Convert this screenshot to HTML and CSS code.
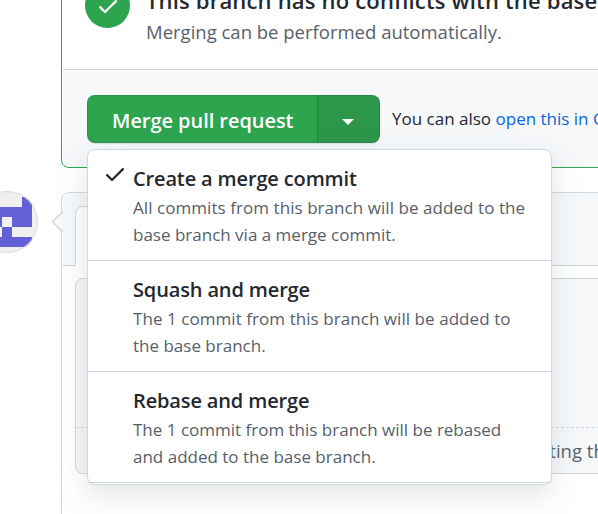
FILE: index.html
```html
<!DOCTYPE html>
<html lang="en">
<head>
<meta charset="utf-8">
<title>Merge pull request</title>
<link rel="stylesheet" href="styles.css">
</head>
<body>
<main class="page">
  <section class="merge-box">
    <div class="status">
      <span class="status-icon"><svg width="24" height="24" viewBox="0 0 16 16" fill="currentColor"><path d="M13.78 4.22a.75.75 0 0 1 0 1.06l-7.25 7.25a.75.75 0 0 1-1.06 0L2.22 9.28a.75.75 0 1 1 1.06-1.06L6 10.94l6.72-6.72a.75.75 0 0 1 1.06 0Z"/></svg></span>
      <div class="status-text">
        <h3><span>This branch has no conflicts with the base branch</span></h3>
        <p><span>Merging can be performed automatically.</span></p>
      </div>
    </div>
    <div class="actions">
      <div class="button-group">
        <button class="merge"><span>Merge pull request</span></button>
        <button class="toggle" aria-label="Select merge method"><span class="caret"></span></button>
        <div class="menu">
          <div class="item">
            <svg class="check" width="24" height="24" viewBox="0 0 16 16" fill="currentColor"><path d="M13.78 4.22a.75.75 0 0 1 0 1.06l-7.25 7.25a.75.75 0 0 1-1.06 0L2.22 9.28a.75.75 0 1 1 1.06-1.06L6 10.94l6.72-6.72a.75.75 0 0 1 1.06 0Z"/></svg>
            <h4><span>Create a merge commit</span></h4>
            <p><span class="loose">All commits from this branch will be added to the</span><br><span>base branch via a merge commit.</span></p>
          </div>
          <div class="item">
            <h4><span>Squash and merge</span></h4>
            <p><span class="loose">The 1 commit from this branch will be added to</span><br><span>the base branch.</span></p>
          </div>
          <div class="item">
            <h4><span>Rebase and merge</span></h4>
            <p><span>The 1 commit from this branch will be rebased</span><br><span>and added to the base branch.</span></p>
          </div>
        </div>
      </div>
      <p class="also"><span>You can also <a href="#">open this in GitHub Desktop</a></span></p>
    </div>
  </section>

  <section class="comment">
    <svg class="avatar" width="64" height="64" viewBox="-25 190 64 64">
      <defs><clipPath id="round"><circle cx="7" cy="222" r="31"/></clipPath></defs>
      <g clip-path="url(#round)">
        <path fill="#f0f0f0" d="M-25 190h64v64h-64z"/>
        <path fill="#635fd5" shape-rendering="crispEdges" d="M22 197h10v30H12v-10H2v10h-20v-20h40zM2 227h10v10H2zM-18 237h50v10h-50z"/>
      </g>
      <circle cx="7" cy="222" r="30.5" fill="none" stroke="#dedfe0"/>
    </svg>
    <svg class="pointer" width="12" height="22" viewBox="0 0 12 22"><path d="M12 .5 1.5 11 12 21.500" fill="#f6f8fa" stroke="#d0d7de" stroke-width="1.400"/></svg>
    <header class="tabs"><div class="tab"></div></header>
    <div class="editor">
      <div class="textarea"></div>
      <div class="attach"><span>Attach files by dragging &amp; dropping, selecting or pasting them.</span></div>
    </div>
  </section>
</main>
</body>
</html>
```
FILE: styles.css
```css
* { box-sizing: border-box; }
body { margin: 0; background: #fff; color: #24292f; font: 18px/27px "Open Sans", "Noto Sans", sans-serif; }
h3, h4, p { margin: 0; }
.page { width: 598px; height: 514px; overflow: hidden; }
.page span { white-space: nowrap; }
.merge-box { width: 900px; height: 178px; margin: -10px 0 24px 61px; border: 1px solid #2da44e; border-radius: 8px; background: #fff; }
.status { display: flex; height: 79px; padding: 0 0 0 22px; border-bottom: 1px solid #d0d7de; margin-left: 1px; }
.status-icon { display: flex; align-items: center; justify-content: center; width: 45px; height: 45px; margin-top: -8px; border-radius: 50%; color: #fff; background: #2da44e; }
.status-text { margin-left: 16px; }
.status-text h3 { margin-top: -6px; font-size: 22px; line-height: 30px; font-weight: 600; letter-spacing: .18px; }
.status-text p { margin-top: 3px; color: #57606a; font-size: 18.5px; line-height: 27px; }
.actions { display: flex; align-items: flex-start; height: 97px; margin-left: 1px; padding: 25px 0 0 24px; background: #f6f8fa; border-radius: 0 0 7px 7px; }
.button-group { position: relative; display: flex; flex: none; width: 293px; height: 48px; box-shadow: 0 1px 1px rgba(27,31,36,.1); border-radius: 8px; }
button { padding: 0; border: 1px solid rgba(27,31,36,.15); color: #fff; font: 600 20px/44px "Open Sans", sans-serif; background: #2da44e; }
.merge { width: 230px; border-right: 0; padding: 3px 0 0 24px; text-align: left; letter-spacing: -.05px; border-radius: 8px 0 0 8px; }
.toggle { display: flex; align-items: center; justify-content: center; width: 63px; padding-right: 2px; border-radius: 0 8px 8px 0; background: #2c974b; }
.caret { margin-top: 5px; border: 6px solid transparent; border-top-color: #fff; border-bottom: 0; }
.also { margin: 10px 0 0 12px; font-size: 17px; line-height: 27px; }
.also a { color: #0969da; text-decoration: none; }
.menu { position: absolute; z-index: 2; left: 0; top: 54px; width: 465px; height: 336px; border: 1px solid #d0d7de; border-radius: 8px; background: #fff; box-shadow: 0 10px 30px rgba(140,149,159,.26); }
.item { position: relative; height: 111px; padding: 14px 0 0 45px; border-bottom: 1px solid #d0d7de; }
.item h4 { font-size: 20px; line-height: 30px; font-weight: 600; letter-spacing: -.14px; }
.item p { color: #57606a; font-size: 17px; line-height: 27px; }
.item .loose { letter-spacing: .06px; }
.check { position: absolute; left: 15px; top: 12px; }
.comment { position: relative; width: 900px; height: 360px; margin-left: 61px; border: 1px solid #d0d7de; border-radius: 8px; background: #fff; }
.avatar { position: absolute; left: -87px; top: -3px; }
.pointer { position: absolute; left: -11px; top: 18px; }
.tabs { height: 73px; margin-left: 1px; padding: 13px 0 0 12px; border-bottom: 1px solid #d0d7de; border-radius: 7px 7px 0 0; background: #f6f8fa; }
.tab { width: 140px; height: 60px; border: 1px solid #d0d7de; border-bottom: 0; border-radius: 8px 8px 0 0; background: #fff; }
.editor { width: 850px; height: 196px; margin: 12px 0 0 13px; border: 1px solid #d0d7de; border-radius: 8px; background: #f6f8fa; }
.textarea { height: 149px; border-bottom: 1px dashed #d0d7de; }
.attach { padding: 9px 0 0 27px; color: #57606a; font-size: 18.5px; }
```
